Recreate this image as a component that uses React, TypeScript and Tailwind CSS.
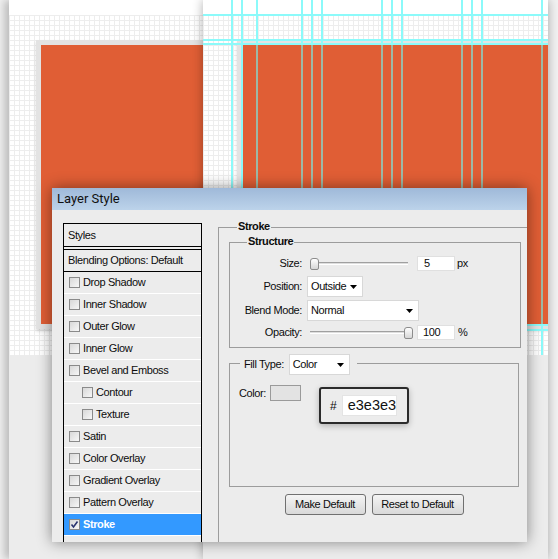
import React from "react";

const GRID =
  "bg-white bg-[linear-gradient(to_right,#ededed_1px,transparent_1px),linear-gradient(to_bottom,#ededed_1px,transparent_1px)] bg-[size:5px_5px]";

const items: { label: string; indent?: boolean; selected?: boolean }[] = [
  { label: "Drop Shadow" },
  { label: "Inner Shadow" },
  { label: "Outer Glow" },
  { label: "Inner Glow" },
  { label: "Bevel and Emboss" },
  { label: "Contour", indent: true },
  { label: "Texture", indent: true },
  { label: "Satin" },
  { label: "Color Overlay" },
  { label: "Gradient Overlay" },
  { label: "Pattern Overlay" },
  { label: "Stroke", selected: true },
];

const vGuides: { c: string; full?: boolean }[] = [
  { c: "left-[28px]", full: true },
  { c: "left-[38px]", full: true },
  { c: "left-[53px]" },
  { c: "left-[98px]" },
  { c: "left-[108px]" },
  { c: "left-[118px]" },
  { c: "left-[178px]" },
  { c: "left-[188px]" },
  { c: "left-[198px]" },
  { c: "left-[258px]" },
  { c: "left-[268px]" },
  { c: "left-[278px]" },
  { c: "left-[338px]" },
];

const hGuides = ["top-[14px]", "top-[39px]", "top-[43px]", "top-[324px]", "top-[329px]"];

function Checkbox({ checked }: { checked?: boolean }) {
  return (
    <div className="w-[11px] h-[11px] shrink-0 border border-[#8a8a8a] bg-[linear-gradient(135deg,#d8d8d8,#f7f7f7)] flex items-center justify-center">
      {checked && (
        <svg width="9" height="9" viewBox="0 0 9 9">
          <path d="M1.5 4.5 L3.5 7 L7.5 1.5" fill="none" stroke="#2a3470" strokeWidth="1.6" />
        </svg>
      )}
    </div>
  );
}

function Triangle() {
  return (
    <svg width="7" height="4" viewBox="0 0 7 4" className="shrink-0">
      <path d="M0 0 H7 L3.5 4 Z" fill="#000" />
    </svg>
  );
}

function Dropdown({ label, w }: { label: string; w: string }) {
  return (
    <div
      className={`${w} h-[21px] bg-white border border-[#d8d8d8] flex items-center justify-between pl-[3px] pr-[5px] shrink-0`}
    >
      <span>{label}</span>
      <Triangle />
    </div>
  );
}

function Slider({ right }: { right?: boolean }) {
  return (
    <div className="relative ml-[8px] w-[102px] h-[15px] shrink-0">
      <div className="absolute left-0 w-[98px] top-[6px] h-[3px] bg-[#dedede] border-t border-[#a0a0a0] border-b border-b-white" />
      <div
        className={`absolute top-[2px] h-[12px] w-[9px] rounded-t-[3px] rounded-b-[2px] border border-[#8c8c8c] bg-gradient-to-b from-white to-[#d6d6d6] ${
          right ? "left-[94px]" : "left-0"
        }`}
      />
    </div>
  );
}

export default function App() {
  return (
    <div className="relative w-[558px] h-[559px] overflow-hidden bg-[#f2f2f2] font-['Liberation_Sans',Arial,sans-serif]">
      {/* left document window */}
      <div className="absolute left-[9px] top-0 w-[205px] h-[559px] bg-[#ececec] overflow-hidden shadow-[-5px_0_8px_rgba(0,0,0,0.22)]">
        <div className="h-[15px] bg-white" />
        <div className={`h-[340px] pt-[25px] pl-[27px] ${GRID}`}>
          <div className="w-[220px] h-[289px] bg-[#e05e35] border-[5px] border-[#e3e3e3] shadow-[0_2px_3px_rgba(0,0,0,0.15)]" />
        </div>
      </div>

      {/* right document window */}
      <div className="absolute left-[203px] top-0 w-[345px] h-[559px] bg-[#ececec] overflow-hidden shadow-[0_0_10px_rgba(0,0,0,0.32)]">
        <div className="h-[15px] bg-white" />
        <div className={`h-[340px] pt-[25px] pl-[34px] ${GRID}`}>
          <div className="w-[330px] h-[289px] bg-[#e05e35] border-[5px] border-[#e3e3e3] shadow-[0_2px_3px_rgba(0,0,0,0.15)]" />
        </div>
        {/* guides */}
        {vGuides.map((g, i) => (
          <div key={i} className={`absolute top-0 w-[2px] h-[355px] flex flex-col ${g.c}`}>
            {g.full ? (
              <div className="h-[355px] bg-[#8cfafa]" />
            ) : (
              <>
                <div className="h-[45px] bg-[#8cfafa]" />
                <div className="h-[279px] bg-[#9db9a6]" />
                <div className="h-[31px] bg-[#8cfafa]" />
              </>
            )}
          </div>
        ))}
        {hGuides.map((c, i) => (
          <div key={i} className={`absolute left-0 right-0 h-[2px] bg-[#8cfafa] ${c}`} />
        ))}
      </div>

      {/* Layer Style dialog */}
      <div className="absolute left-[52px] top-[188px] w-[475px] h-[354px] bg-[#ececec] overflow-hidden shadow-[0_0_14px_rgba(0,0,0,0.45)] text-[11px] tracking-[-0.4px] text-[#0c0c0c]">
        <div className="h-[22px] bg-gradient-to-b from-[#9fb9d9] to-[#bcd3ea] flex items-center pl-[5px] text-[13px] tracking-normal font-['Roboto',sans-serif] text-[#101010]">
          Layer Style
        </div>
        <div className="flex pl-[11px]">
          {/* styles list */}
          <div className="mt-[13px] w-[139px] h-[340px] border border-black shrink-0 flex flex-col">
            <div className="h-[23px] shrink-0 flex items-center pl-[4px] border-b border-black">Styles</div>
            <div className="h-[2px] shrink-0" />
            <div className="h-[23px] shrink-0 flex items-center pl-[4px] border-y border-black">
              Blending Options: Default
            </div>
            {items.map((it) => (
              <div
                key={it.label}
                className={`h-[22px] shrink-0 flex items-center gap-[3px] border-b border-white ${
                  it.indent ? "pl-[18px]" : "pl-[5px]"
                } ${it.selected ? "bg-[#3399ff] text-white font-bold" : ""}`}
              >
                <Checkbox checked={it.selected} />
                <span>{it.label}</span>
              </div>
            ))}
          </div>

          {/* Stroke group */}
          <div className="relative ml-[16px] mt-[17px] w-[330px] h-[400px] shrink-0 border-t border-l border-[#9c9c9c] pl-[10px] pt-[14px]">
            <span className="absolute left-[18px] -top-[8px] leading-[13px] px-[1px] bg-[#ececec] font-bold">Stroke</span>

            {/* Structure */}
            <div className="relative w-[292px] h-[106px] border border-[#9c9c9c] pt-[13px]">
              <span className="absolute left-[17px] -top-[8px] leading-[13px] px-[1px] bg-[#ececec] font-bold">
                Structure
              </span>
              <div className="h-[15px] flex items-center">
                <span className="w-[72px] text-right shrink-0">Size:</span>
                <Slider />
                <div className="ml-[5px] w-[38px] h-[15px] bg-white border border-[#e0e0e0] pl-[6px] flex items-center">5</div>
                <span className="ml-[2px]">px</span>
              </div>
              <div className="mt-[5px] h-[21px] flex items-center">
                <span className="w-[72px] text-right shrink-0">Position:</span>
                <div className="ml-[5px]">
                  <Dropdown label="Outside" w="w-[56px]" />
                </div>
              </div>
              <div className="mt-[3px] h-[21px] flex items-center">
                <span className="w-[72px] text-right shrink-0">Blend Mode:</span>
                <div className="ml-[5px]">
                  <Dropdown label="Normal" w="w-[112px]" />
                </div>
              </div>
              <div className="mt-[4px] h-[15px] flex items-center">
                <span className="w-[72px] text-right shrink-0">Opacity:</span>
                <Slider right />
                <div className="ml-[5px] w-[38px] h-[15px] bg-white border border-[#e0e0e0] pl-[5px] flex items-center">100</div>
                <span className="ml-[3px]">%</span>
              </div>
            </div>

            {/* Fill Type */}
            <div className="relative mt-[15px] w-[290px] h-[124px] border border-[#9c9c9c]">
              <div className="absolute left-[10px] -top-[10px] flex items-center bg-[#ececec] pl-[4px] pr-[7px]">
                <span>Fill Type:</span>
                <div className="ml-[5px]">
                  <Dropdown label="Color" w="w-[61px]" />
                </div>
              </div>
              <div className="mt-[21px] pl-[9px] flex items-center">
                <span>Color:</span>
                <div className="ml-[4px] w-[31px] h-[16px] bg-[#e3e3e3] border border-[#9a9a9a]" />
              </div>
              {/* hex popup */}
              <div className="absolute left-[89px] top-[23px] w-[90px] h-[37px] border-2 border-[#2b2b2b] rounded-[3px] bg-[#ececec] shadow-[0_2px_6px_rgba(0,0,0,0.25)] flex items-center pl-[9px] tracking-normal">
                <span className="text-[12px]">#</span>
                <div className="ml-[5px] w-[55px] h-[21px] bg-white border border-[#e4e4e4] pl-[5px] flex items-center text-[14.5px] text-[#111]">
                  e3e3e3
                </div>
              </div>
            </div>

            {/* Buttons */}
            <div className="mt-[7px] w-[290px] flex justify-center gap-[6px]">
              <div className="w-[81px] h-[21px] border border-[#707070] rounded-[3px] bg-gradient-to-b from-[#f4f4f4] to-[#d9d9d9] flex items-center justify-center">
                Make Default
              </div>
              <div className="w-[92px] h-[21px] border border-[#707070] rounded-[3px] bg-gradient-to-b from-[#f4f4f4] to-[#d9d9d9] flex items-center justify-center">
                Reset to Default
              </div>
            </div>
          </div>
        </div>
      </div>
    </div>
  );
}
